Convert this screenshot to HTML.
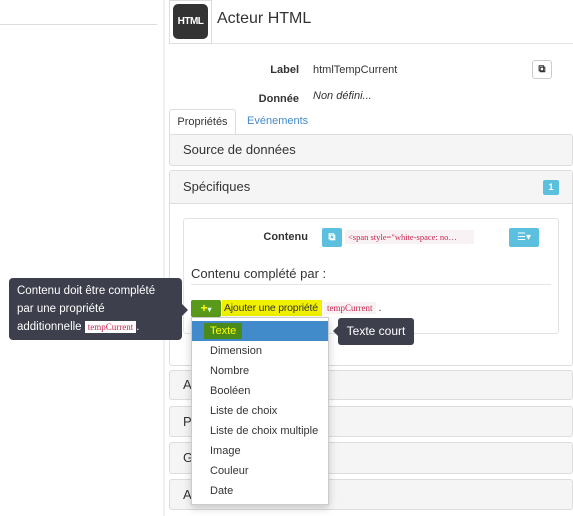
<!DOCTYPE html>
<html><head><meta charset="utf-8"><style>
*{box-sizing:border-box;margin:0;padding:0}
body{width:573px;height:516px;overflow:hidden;background:#fff;font-family:"Liberation Sans",sans-serif;color:#333;position:relative;font-size:11px}
.a{position:absolute}
.panel{position:absolute;left:169px;width:404px;background:#f5f5f5;border:1px solid #ddd;border-radius:3px}
.ph{font-size:13px;padding-left:13px}
code{font-family:"Liberation Serif",serif;color:#c7254e;background:#f9f2f4;font-size:9px;padding:1px 3px}
.dd div{height:20px;line-height:20px;padding-left:18px;font-size:11px}
</style></head><body>
<div class="a" style="left:0;top:24px;width:157px;height:1px;background:#ddd"></div>
<div class="a" style="left:163px;top:0;width:2px;height:516px;background:#f1f1f1"></div>
<div class="a" style="left:169px;top:0;width:43px;height:44px;border:1px solid #ddd;background:#fff"></div>
<div class="a" style="left:173px;top:4px;width:35px;height:35px;background:#333;border-radius:5px;color:#fff;font-weight:bold;font-size:10px;text-align:center;line-height:35px;letter-spacing:-0.5px">HTML</div>
<div class="a" style="left:212px;top:43px;width:361px;height:1px;background:#e5e5e5"></div>
<div class="a" style="left:217px;top:10px;font-size:16px;color:#333">Acteur HTML</div>
<div class="a" style="left:250px;top:64px;width:49px;text-align:right;font-weight:bold;font-size:11px">Label</div>
<div class="a" style="left:313px;top:64px;font-size:11px">htmlTempCurrent</div>
<div class="a" style="left:532px;top:60px;width:20px;height:19px;border:1px solid #ccc;border-radius:3px;background:#fff;font-size:10px;text-align:center;line-height:17px;font-weight:bold">&#x29C9;</div>
<div class="a" style="left:250px;top:93px;width:49px;text-align:right;font-weight:bold;font-size:11px">Donnée</div>
<div class="a" style="left:313px;top:90px;font-size:11px;font-style:italic">Non défini...</div>
<div class="a" style="left:169px;top:109px;width:67px;height:26px;border:1px solid #ddd;border-bottom:none;background:#fff;border-radius:3px 3px 0 0;font-size:11px;text-align:center;line-height:24px">Propriétés</div>
<div class="a" style="left:247px;top:115px;font-size:11px;color:#428bca">Evénements</div>
<div class="panel" style="top:134px;height:32px"><div class="ph" style="line-height:30px">Source de données</div></div>
<div class="panel" style="top:170px;height:196px;background:#fff"><div class="ph" style="line-height:32px;background:#f5f5f5;border-bottom:1px solid #ddd;height:33px">Spécifiques</div></div>
<div class="a" style="left:543px;top:180px;width:16px;height:15px;background:#5bc0de;border-radius:2px;color:#fff;font-size:9px;font-weight:bold;text-align:center;line-height:15px">1</div>
<div class="a" style="left:183px;top:218px;width:376px;height:116px;border:1px solid #e3e3e3;border-radius:3px;background:#fff"></div>
<div class="a" style="left:250px;top:231px;width:58px;text-align:right;font-weight:bold;font-size:11px">Contenu</div>
<div class="a" style="left:322px;top:228px;width:20px;height:19px;background:#5bc0de;border-radius:2px;color:#fff;font-size:10px;text-align:center;line-height:19px;font-weight:bold">&#x29C9;</div>
<div class="a" style="left:345px;top:230px;width:129px;height:14px;background:#f9f2f4;color:#c7254e;font-family:'Liberation Serif',serif;font-size:8.5px;line-height:14px;padding-left:3px;white-space:nowrap;overflow:hidden">&lt;span style="white-space: no…</div>
<div class="a" style="left:509px;top:228px;width:30px;height:19px;background:#5bc0de;border-radius:2px;color:#fff;font-size:10px;text-align:center;line-height:19px">&#x2630;&#x25BE;</div>
<div class="a" style="left:191px;top:266px;font-size:13px">Contenu complété par :</div>
<div class="a" style="left:191px;top:284px;width:360px;height:1px;background:#e5e5e5"></div>
<div class="a" style="left:191px;top:300px;width:30px;height:17px;background:#5a9a1a;border-radius:2px;color:#ff0;font-size:12px;font-weight:bold;text-align:center;line-height:16px">+<span style="font-size:8px;color:#dfe">▾</span></div>
<div class="a" style="left:222px;top:300px;width:100px;height:16px;background:#f0f000;font-size:10.5px;line-height:16px;padding-left:2px;white-space:nowrap;letter-spacing:-0.2px">Ajouter une propriété</div>
<div class="a" style="left:324px;top:302px"><code>tempCurrent</code> .</div>
<div class="a" style="left:9px;top:278px;width:173px;height:62px;background:#3d3f4c;border-radius:4px;color:#fff;font-size:11.5px;line-height:18px;padding:4px 8px;white-space:nowrap">Contenu doit être complété<br>par une propriété<br>additionnelle <code style="background:#fff;font-size:9px">tempCurrent</code>.</div>
<div class="a" style="left:182px;top:304px;border:6px solid transparent;border-left-color:#3d3f4c"></div>
<div class="panel" style="top:370px;height:30px"><div class="ph" style="line-height:28px">As</div></div>
<div class="panel" style="top:406px;height:31px"><div class="ph" style="line-height:29px">Po</div></div>
<div class="panel" style="top:442px;height:32px"><div class="ph" style="line-height:30px">G</div></div>
<div class="panel" style="top:479px;height:31px"><div class="ph" style="line-height:29px">Ac</div></div>
<div class="a dd" style="left:191px;top:317px;width:138px;height:188px;background:#fff;border:1px solid #ccc;box-shadow:0 3px 8px rgba(0,0,0,.2);padding-top:3px">
<div style="background:#428bca;color:#ff0;"><span style="background:#4a8a1a;padding:2px 6px;margin-left:-6px">Texte</span></div>
<div>Dimension</div><div>Nombre</div><div>Booléen</div><div>Liste de choix</div><div>Liste de choix multiple</div><div>Image</div><div>Couleur</div><div>Date</div>
</div>
<div class="a" style="left:338px;top:318px;width:76px;height:27px;background:#3d3f4c;border-radius:3px;color:#fff;font-size:12px;line-height:27px;text-align:center">Texte court</div>
<div class="a" style="left:328px;top:326px;border:5px solid transparent;border-right-color:#3d3f4c"></div>
</body></html>
